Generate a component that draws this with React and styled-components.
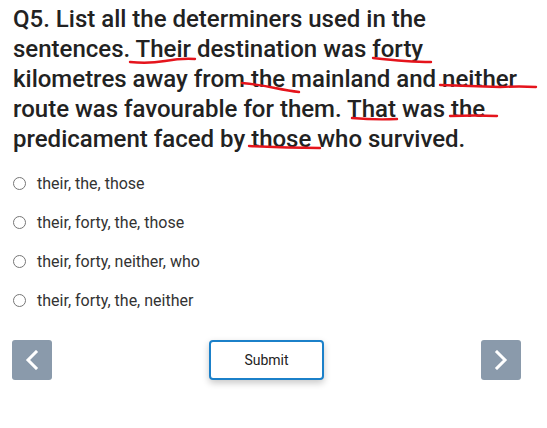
import React from "react";
import styled, { createGlobalStyle } from "styled-components";

const Global = createGlobalStyle`
  html, body { margin: 0; padding: 0; background: #fff; }
  body { font-family: Roboto, "Liberation Sans", Arial, sans-serif; }
`;

const Page = styled.div`
  width: 547px;
  height: 428px;
  display: flex;
  flex-direction: column;
  box-sizing: border-box;
`;

const Question = styled.div`
  position: relative;
  padding: 4px 13px 0;
  font-size: 24px;
  font-weight: 500;
  line-height: 30px;
  color: #222;
`;

const Marks = styled.svg`
  position: absolute;
  left: 0;
  top: 0;
  width: 547px;
  height: 160px;
  pointer-events: none;
`;

const Options = styled.div`
  display: flex;
  flex-direction: column;
  padding: 10px 13px 0;
`;

const OptionRow = styled.label`
  display: flex;
  align-items: center;
  gap: 11px;
  height: 39px;
  font-size: 16px;
  color: #333;
  cursor: pointer;
`;

const Radio = styled.span`
  width: 13px;
  height: 13px;
  box-sizing: border-box;
  border: 1px solid #767676;
  border-radius: 50%;
  background: #fff;
  flex: none;
`;

const Footer = styled.div`
  display: flex;
  align-items: center;
  justify-content: space-between;
  padding: 20px 26px 0 12px;
`;

const NavButton = styled.button`
  width: 40px;
  height: 40px;
  border: none;
  border-radius: 3px;
  background: #8a9aab;
  display: flex;
  align-items: center;
  justify-content: center;
  padding: 0;
`;

const SubmitButton = styled.button`
  width: 115px;
  height: 40px;
  box-sizing: border-box;
  border: 2px solid #1b80c9;
  border-radius: 4px;
  background: #fff;
  box-shadow: 0 3px 7px rgba(0, 0, 0, 0.22);
  font-family: Roboto, "Liberation Sans", Arial, sans-serif;
  font-size: 14px;
  color: #222;
  padding: 0;
`;

const Chevron = ({ dir }) => (
  <svg width="14" height="20" viewBox="0 0 14 20">
    <path
      d={dir === "left" ? "M11 2 L3 10 L11 18" : "M3 2 L11 10 L3 18"}
      fill="none"
      stroke="#fff"
      strokeWidth="3"
      strokeLinecap="square"
    />
  </svg>
);

const underlines = [
  "M130 62 Q 148 64 165 61 T 195 59",
  "M373 58 Q 392 60 405 61 Q 420 62 431 62",
  "M242 83 Q 262 85 275 88 Q 290 91 299 92",
  "M440 85 Q 470 86 500 87 Q 520 86 536 87",
  "M352 118 Q 375 120 397 119",
  "M450 116 Q 475 115 497 116",
  "M249 146 Q 285 148 320 148",
];

const options = [
  "their, the, those",
  "their, forty, the, those",
  "their, forty, neither, who",
  "their, forty, the, neither",
];

export default function App() {
  return (
    <Page>
      <Global />
      <Question>
        Q5. List all the determiners used in the sentences. Their destination
        was forty kilometres away from the mainland and neither route was
        favourable for them. That was the predicament faced by those who
        survived.
        <Marks viewBox="0 0 547 160">
          {underlines.map((d, i) => (
            <path
              key={i}
              d={d}
              fill="none"
              stroke="#e5141c"
              strokeWidth="2.4"
              strokeLinecap="round"
            />
          ))}
        </Marks>
      </Question>
      <Options>
        {options.map((o) => (
          <OptionRow key={o}>
            <Radio />
            {o}
          </OptionRow>
        ))}
      </Options>
      <Footer>
        <NavButton aria-label="Previous">
          <Chevron dir="left" />
        </NavButton>
        <SubmitButton>Submit</SubmitButton>
        <NavButton aria-label="Next">
          <Chevron dir="right" />
        </NavButton>
      </Footer>
    </Page>
  );
}
